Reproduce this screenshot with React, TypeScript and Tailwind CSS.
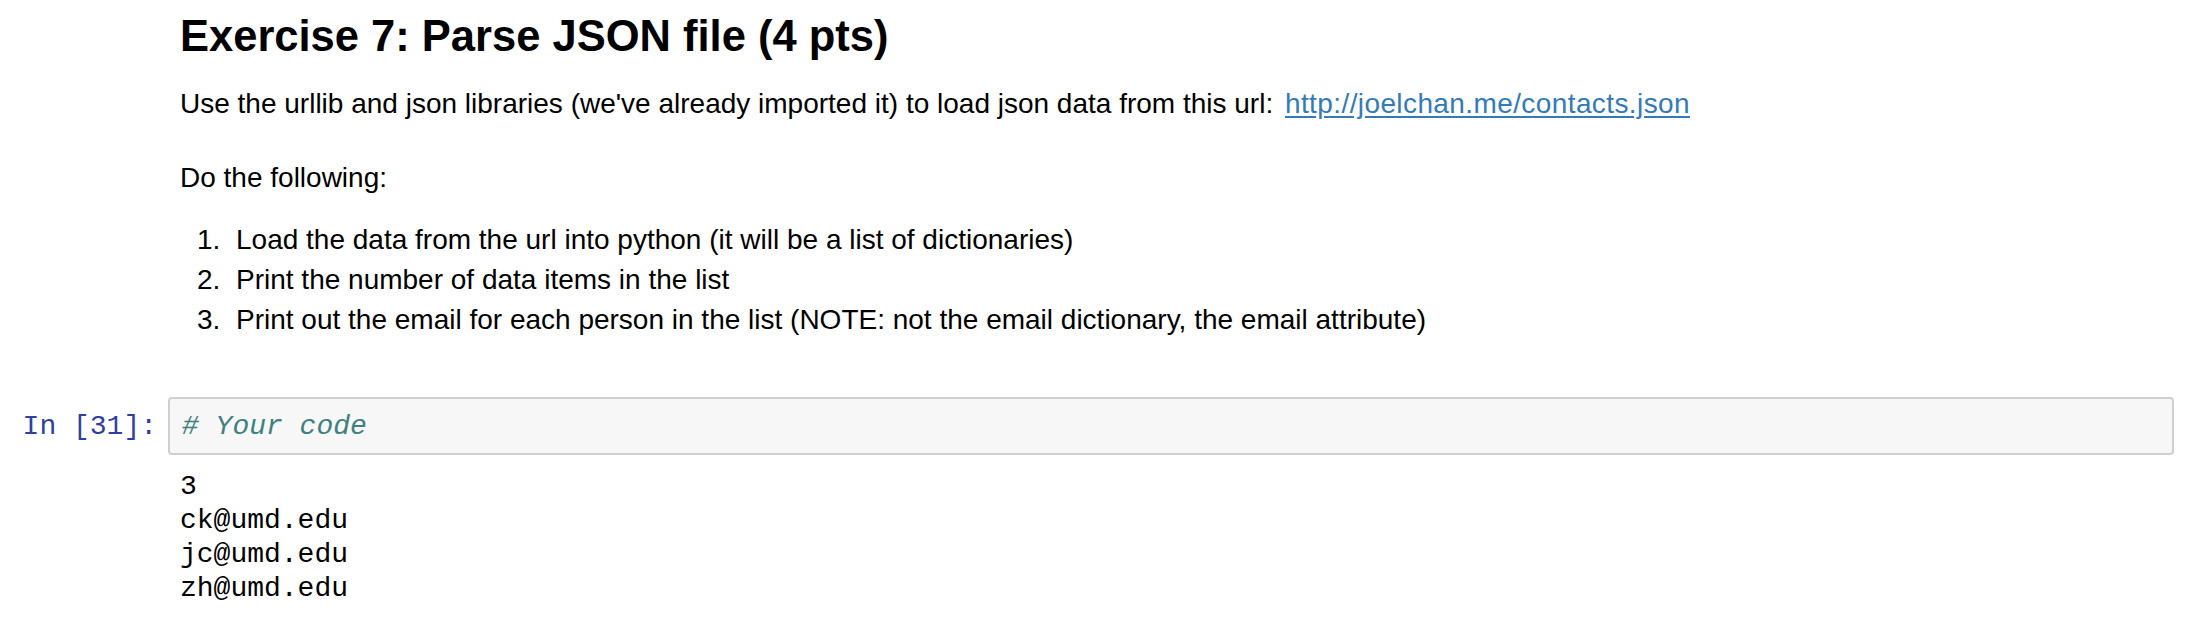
import React from 'react'

const sans = "font-['Liberation_Sans',Arial,sans-serif]"
const mono = "font-['Liberation_Mono','Courier_New',monospace]"

const steps = [
  'Load the data from the url into python (it will be a list of dictionaries)',
  'Print the number of data items in the list',
  'Print out the email for each person in the list (NOTE: not the email dictionary, the email attribute)',
]

const output = ['3', 'ck@umd.edu', 'jc@umd.edu', 'zh@umd.edu']

const MarkdownCell: React.FC = () => {
  return (
    <div className={`pl-[180px] text-black ${sans}`}>
      <h2 className="mt-[9px] text-[43.5px] font-bold leading-[52px]">
        Exercise 7: Parse JSON file (4 pts)
      </h2>
      <p className="mt-[22px] text-[28px] leading-[40px]">
        Use the urllib and json libraries (we've already imported it) to load
        json data from this url:{' '}
        <a
          href="#"
          className="ml-[4px] tracking-[0.4px] text-[#337ab7] underline underline-offset-[3px]"
        >
          http://joelchan.me/contacts.json
        </a>
      </p>
      <p className="mt-[34px] text-[28px] leading-[40px]">Do the following:</p>
      <ol className="mt-[22px] text-[28px] leading-[40px]">
        {steps.map((s, i) => (
          <li key={i} className="flex">
            <span className="ml-[17px] w-[39px] shrink-0">{i + 1}.</span>
            <span>{s}</span>
          </li>
        ))}
      </ol>
    </div>
  )
}

const CodeCell: React.FC = () => {
  return (
    <div className={`mt-[57px] ${mono}`}>
      <div className="flex">
        <div className="w-[168px] shrink-0 pr-[11px] pt-[13px] text-right text-[28px] leading-[34px] text-[#303f9f]">
          In [31]:
        </div>
        <div className="w-[2006px] rounded-[4px] border-2 border-[#cfcfcf] bg-[#f7f7f7] pl-[12px] pt-[11px] pb-[9px] text-[28px] leading-[34px]">
          <span className="italic text-[#408080]"># Your code</span>
        </div>
      </div>
      <div className="mt-[15px] pl-[180px] text-[28px] leading-[34px] text-black">
        {output.map((line) => (
          <div key={line}>{line}</div>
        ))}
      </div>
    </div>
  )
}

export default function App() {
  return (
    <div className="h-[636px] w-[2196px] overflow-hidden bg-white pt-px">
      <MarkdownCell />
      <CodeCell />
    </div>
  )
}
